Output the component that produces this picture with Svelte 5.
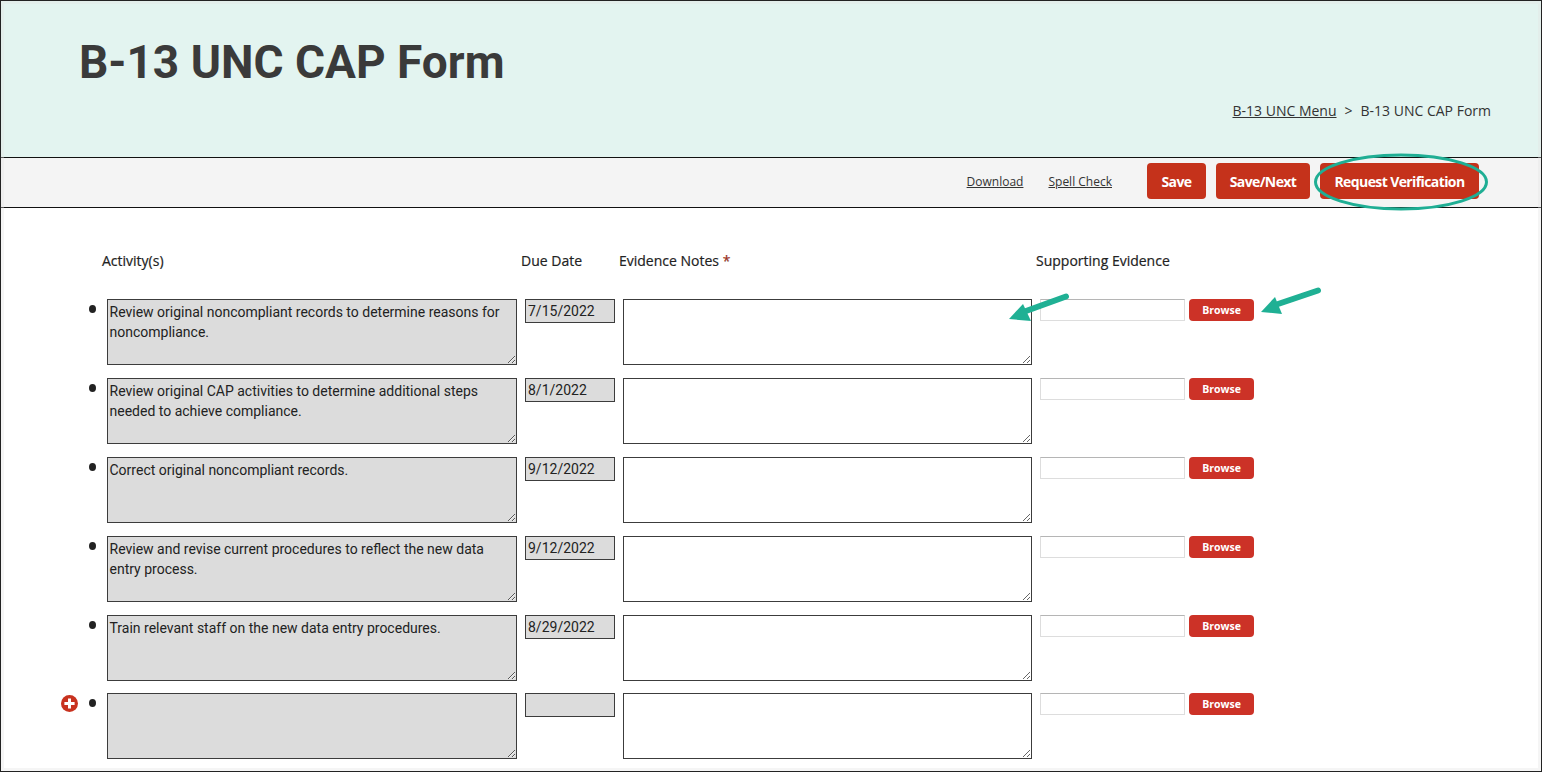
<script>
  const rows = [
    { activity: 'Review original noncompliant records to determine reasons for noncompliance.', due: '7/15/2022' },
    { activity: 'Review original CAP activities to determine additional steps needed to achieve compliance.', due: '8/1/2022' },
    { activity: 'Correct original noncompliant records.', due: '9/12/2022' },
    { activity: 'Review and revise current procedures to reflect the new data entry process.', due: '9/12/2022' },
    { activity: 'Train relevant staff on the new data entry procedures.', due: '8/29/2022' },
    { activity: '', due: '', add: true }
  ];
</script>

<div class="frame">
  <header class="banner">
    <h1>B-13 UNC CAP Form</h1>
    <nav class="crumbs">
      <a href="#menu">B-13 UNC Menu</a>
      <span>&gt;</span>
      <span>B-13 UNC CAP Form</span>
    </nav>
  </header>

  <div class="toolbar">
    <a class="tool-link" href="#download">Download</a>
    <a class="tool-link spell" href="#spell">Spell Check</a>
    <button type="button" class="btn save">Save</button>
    <button type="button" class="btn next">Save/Next</button>
    <div class="verify">
      <button type="button" class="btn request">Request Verification</button>
      <svg class="ring" width="176" height="60" viewBox="0 0 176 60" fill="none">
        <ellipse cx="88" cy="30" rx="85.5" ry="27" stroke="#1fae94" stroke-width="3"/>
      </svg>
    </div>
  </div>

  <main class="form">
    <div class="heads">
      <span class="h-activity">Activity(s)</span>
      <span class="h-due">Due Date</span>
      <span class="h-notes">Evidence Notes <b>*</b></span>
      <span class="h-support">Supporting Evidence</span>
    </div>

    {#each rows as row, i}
      <div class="row" class:last={row.add}>
        <div class="add">
          {#if row.add}
            <svg width="17" height="17" viewBox="0 0 16 16">
              <circle cx="8" cy="8" r="8" fill="#c8321f"/>
              <path d="M6.6 3.2h2.8v3.4h3.4v2.8H9.4v3.4H6.6V9.4H3.2V6.6h3.4z" fill="#fff"/>
            </svg>
          {/if}
        </div>
        <span class="dot"></span>
        <textarea class="activity" readonly value={row.activity}></textarea>
        <input class="due" readonly value={row.due} />
        <textarea class="notes"></textarea>
        <input class="file" readonly />
        <button type="button" class="browse">Browse</button>
        {#if i === 0}
          <svg class="arrow one" width="62" height="36" viewBox="0 0 62 36">
            <path d="M57 3.5 L17 18" stroke="#1fb094" stroke-width="6" stroke-linecap="round"/>
            <path d="M0 26 L14 11 L22 28z" fill="#1fb094"/>
          </svg>
          <svg class="arrow two" width="62" height="36" viewBox="0 0 62 36">
            <path d="M57 3.5 L17 17" stroke="#1fb094" stroke-width="6" stroke-linecap="round"/>
            <path d="M0 25 L14 10 L21 27z" fill="#1fb094"/>
          </svg>
        {/if}
      </div>
    {/each}
  </main>
</div>

<style>
  :global(body) {
    margin: 0;
    background: #fff;
    overflow: hidden;
  }

  .frame {
    width: 1542px;
    height: 772px;
    box-sizing: border-box;
    border: 1px solid #222;
    overflow: hidden;
    color: #222;
    font-family: "Open Sans", sans-serif;
    position: relative;
  }

  /* pale inner edge of the screenshot */
  .frame::after {
    content: '';
    position: absolute;
    inset: 0;
    border: 3px solid rgba(225, 225, 225, 0.35);
    pointer-events: none;
  }

  .banner {
    height: 156px;
    box-sizing: border-box;
    background: #e3f4f0;
    position: relative;
    padding: 34px 0 0 78px;
  }

  h1 {
    margin: 0;
    font: 700 46px/54px Roboto, sans-serif;
    color: #3a3a3a;
  }

  .crumbs {
    position: absolute;
    right: 50px;
    top: 100px;
    display: flex;
    gap: 8px;
    font-size: 14px;
    line-height: 20px;
    color: #333;
  }

  .crumbs a { color: #333; }

  .toolbar {
    height: 51px;
    box-sizing: border-box;
    border-top: 1px solid #111;
    border-bottom: 1px solid #111;
    background: #f4f4f4;
    display: flex;
    align-items: center;
    justify-content: flex-end;
    padding: 0 62px 3px 0;
  }

  .tool-link {
    font-size: 12px;
    color: #333;
    margin-right: 25px;
  }

  .spell { margin-right: 35px; }

  .btn {
    height: 36px;
    border: none;
    border-radius: 4px;
    background: #c5321b;
    color: #fff;
    font: 700 14px "Open Sans", sans-serif;
    letter-spacing: -0.6px;
    padding: 0;
  }

  .save { width: 59px; margin-right: 10px; }
  .next { width: 94px; margin-right: 10px; }
  .request { width: 159px; display: block; }

  .verify { position: relative; }

  .ring {
    position: absolute;
    left: -7px;
    top: -11px;
  }

  .form { padding-top: 44px; }

  .heads {
    height: 18px;
    position: relative;
    font-size: 14px;
    font-weight: 400;
    line-height: 18px;
    margin-bottom: 29px;
    color: #222;
    -webkit-text-stroke: 0.2px #222;
  }

  .heads span { position: absolute; top: 0; }
  .h-activity { left: 101px; }
  .h-due { left: 520px; }
  .h-notes { left: 618px; }
  .h-support { left: 1035px; }
  .heads b { color: #c5321b; font-weight: 400; }

  .row {
    display: grid;
    grid-template-columns: 16px 30px 418px 98px 417px 149px 65px;
    height: 66px;
    margin-bottom: 13px;
    margin-left: 60px;
    position: relative;
    align-items: start;
  }

  .row.last { margin-top: -1px; }

  .add { height: 16px; margin-top: 2px; }
  .add svg { display: block; }

  .dot {
    width: 7px;
    height: 8px;
    border-radius: 50%;
    background: #222;
    margin: 6px 0 0 12px;
  }

  textarea, input {
    box-sizing: border-box;
    margin: 0;
    border: 1px solid #3c3c3c;
    outline: none;
    border-radius: 0;
    font: 14px/20px Roboto, sans-serif;
    color: #222;
  }

  .activity, .notes {
    height: 66px;
    padding: 2px 1px 2px 1.5px;
    resize: both;
    display: block;
  }

  .activity {
    width: 410px;
    background: #dcdcdc;
  }

  .due {
    width: 90px;
    height: 24px;
    padding: 0 2px;
    background: #dcdcdc;
  }

  .notes {
    width: 409px;
    background: #fff;
  }

  .file {
    width: 145px;
    height: 22px;
    border: 1px solid #ddd;
    border-top-color: #b5b5b5;
    background: #fff;
  }

  .browse {
    width: 65px;
    height: 22px;
    border: none;
    border-radius: 4px;
    background: #cc3227;
    color: #fff;
    font: 700 10.5px "Open Sans", sans-serif;
    padding: 0;
  }

  .arrow { position: absolute; }
  .one { left: 948px; top: -6px; }
  .two { left: 1200px; top: -12px; }
</style>
